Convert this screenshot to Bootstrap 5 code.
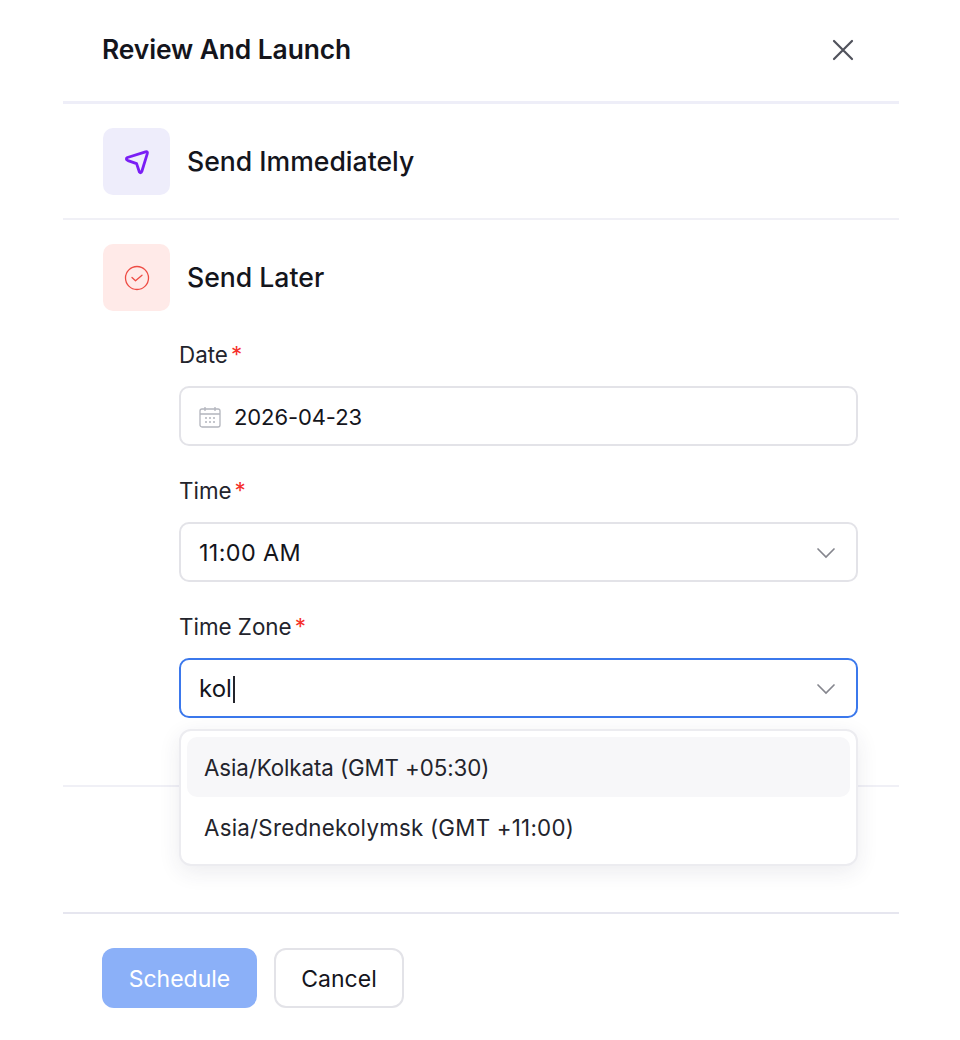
<!DOCTYPE html>
<html lang="en">
<head>
    <meta charset="UTF-8">
    <title>Review And Launch</title>
    <link href="https://cdn.jsdelivr.net/npm/bootstrap@5.3.0/dist/css/bootstrap.min.css" rel="stylesheet">
    <style>
        body {
            font-family: Inter, "Liberation Sans", sans-serif;
            background: #fff;
            color: #14151c;
        }

        .panel {
            width: 836px;
            height: 1040px;
            margin-left: 63px;
        }

        .panel-header {
            height: 104px;
            padding: 0 45px 1px 39px;
            border-bottom: 3px solid #eeeef8;
        }

        .panel-title {
            font-size: 26.4px;
            font-weight: 600;
            margin: 0;
            letter-spacing: -0.1px;
        }

        .option {
            padding: 24px 40px;
            border-bottom: 2px solid #f0f0f6;
        }

        .option-first {
            height: 116px;
        }

        .option-later {
            height: 567px;
        }

        .option-row {
            gap: 17px;
        }

        .option-icon {
            width: 67px;
            height: 67px;
            border-radius: 10px;
        }

        .icon-send {
            background: #eeedfb;
        }

        .icon-later {
            background: #ffeae8;
        }

        .option-name {
            height: 67px;
            font-size: 26.6px;
            font-weight: 500;
        }

        .fields {
            margin: 0 0 0 76px;
            width: 679px;
            padding-top: 26px;
        }

        .field-label {
            display: block;
            font-size: 22.4px;
            line-height: 36px;
            margin-bottom: 13px;
            color: #23242c;
        }

        .req {
            color: #f5302b;
            margin-left: 3px;
        }

        .field-box {
            height: 60px;
            padding: 2px 20px 0 18px;
            margin-bottom: 27px;
            border: 2px solid #e3e3e8;
            border-radius: 10px;
            font-size: 23px;
        }

        .field-focus {
            border-color: #3b78ec;
        }

        .date-value {
            font-size: 22px;
            letter-spacing: -0.1px;
            margin-left: 5px;
        }

        .time-value {
            font-size: 23.4px;
            letter-spacing: 0.35px;
        }

        .search-value {
            font-size: 24px;
        }

        .caret-line {
            display: inline-block;
            width: 2px;
            height: 27px;
            background: #23242c;
            margin-left: 1px;
        }

        .tz-menu {
            position: absolute;
            top: 71px;
            left: 0;
            right: 0;
            height: 137px;
            padding: 6px;
            background: #fff;
            border: 2px solid #ececf0;
            border-radius: 12px;
            box-shadow: 0 6px 22px rgba(40, 40, 80, 0.09);
            z-index: 5;
        }

        .tz-item {
            height: 60px;
            padding: 1px 17px 0;
            border-radius: 10px;
            font-size: 22.3px;
            color: #23242c;
        }

        .tz-active {
            background: #f7f7f9;
            letter-spacing: -0.08px;
        }

        .tz-long {
            letter-spacing: 0.25px;
        }

        .panel-footer {
            margin-top: 125px;
            padding: 34px 39px 0;
            border-top: 2px solid #e6e6ef;
        }

        .btn-schedule,
        .btn-cancel {
            height: 60px;
            padding-top: 8px;
            font-size: 23px;
            border-radius: 12px;
        }

        .btn-schedule {
            width: 155px;
            background: #8bb0f8;
            border: 0;
            color: #fff;
        }

        .btn-cancel {
            width: 130px;
            margin-left: 1px;
            background: #fff;
            border: 2px solid #e3e3e8;
            color: #14151c;
        }
    </style>
</head>
<body>
    <div class="panel">
        <div class="panel-header d-flex align-items-center justify-content-between">
            <h1 class="panel-title">Review And Launch</h1>
            <svg width="22" height="22" viewBox="0 0 22 22" fill="none" stroke="#50525c" stroke-width="2.2" stroke-linecap="round">
                <path d="M2 2l18 18M20 2L2 20"/>
            </svg>
        </div>

        <div class="option option-first option-row d-flex">
            <div class="option-icon icon-send d-flex align-items-center justify-content-center">
                <svg width="28" height="28" viewBox="0 0 28 28" fill="none" stroke="#7a1ef5" stroke-width="2.8" stroke-linejoin="round">
                    <path d="M4.5 9.5L22.5 3.8Q25 3.2 24.3 5.7L18.8 23.5Q17.8 25.8 16.3 23.8L13.6 15.6L5 12.6Q2 11 4.5 9.5z"/>
                </svg>
            </div>
            <div class="option-name d-flex align-items-center">Send Immediately</div>
        </div>

        <div class="option option-later">
            <div class="option-row d-flex">
                <div class="option-icon icon-later d-flex align-items-center justify-content-center">
                    <svg width="28" height="28" viewBox="0 0 28 28" fill="none" stroke="#ee4b43" stroke-width="1.3" stroke-linecap="round" stroke-linejoin="round">
                        <circle cx="14" cy="14" r="11.5"/>
                        <path d="M9 13.5l3.5 3.2 6.5-5.5"/>
                    </svg>
                </div>
                <div class="option-name d-flex align-items-center">Send Later</div>
            </div>

            <div class="fields">
                <label class="field-label">Date<span class="req">*</span></label>
                <div class="field-box d-flex align-items-center gap-2">
                    <svg width="22" height="22" viewBox="0 0 22 22" fill="none" stroke="#b3b5bd" stroke-width="1.3">
                        <rect x="1" y="3" width="20" height="18" rx="2"/>
                        <path d="M1 8h20M6 1v4M16 1v4"/>
                        <path d="M6 12h2M10 12h2M14 12h2M6 16h2M10 16h2M14 16h2"/>
                    </svg>
                    <span class="date-value">2026-04-23</span>
                </div>

                <label class="field-label">Time<span class="req">*</span></label>
                <div class="field-box d-flex align-items-center justify-content-between">
                    <span class="time-value">11:00 AM</span>
                    <svg width="20" height="12" viewBox="0 0 20 12" fill="none" stroke="#85868e" stroke-width="1.7" stroke-linecap="round"><path d="M2 2l8 8 8-8"/></svg>
                </div>

                <label class="field-label">Time Zone<span class="req">*</span></label>
                <div class="position-relative">
                    <div class="field-box field-focus d-flex align-items-center justify-content-between">
                        <span class="search-value d-flex align-items-center">kol<span class="caret-line"></span></span>
                        <svg width="20" height="12" viewBox="0 0 20 12" fill="none" stroke="#85868e" stroke-width="1.7" stroke-linecap="round"><path d="M2 2l8 8 8-8"/></svg>
                    </div>
                    <div class="tz-menu">
                        <div class="tz-item tz-active d-flex align-items-center">Asia/Kolkata (GMT +05:30)</div>
                        <div class="tz-item tz-long d-flex align-items-center">Asia/Srednekolymsk (GMT +11:00)</div>
                    </div>
                </div>
            </div>
        </div>

        <div class="panel-footer d-flex gap-3">
            <button type="button" class="btn btn-schedule">Schedule</button>
            <button type="button" class="btn btn-cancel">Cancel</button>
        </div>
    </div>

    <script src="https://cdn.jsdelivr.net/npm/bootstrap@5.3.0/dist/js/bootstrap.bundle.min.js"></script>
</body>
</html>
